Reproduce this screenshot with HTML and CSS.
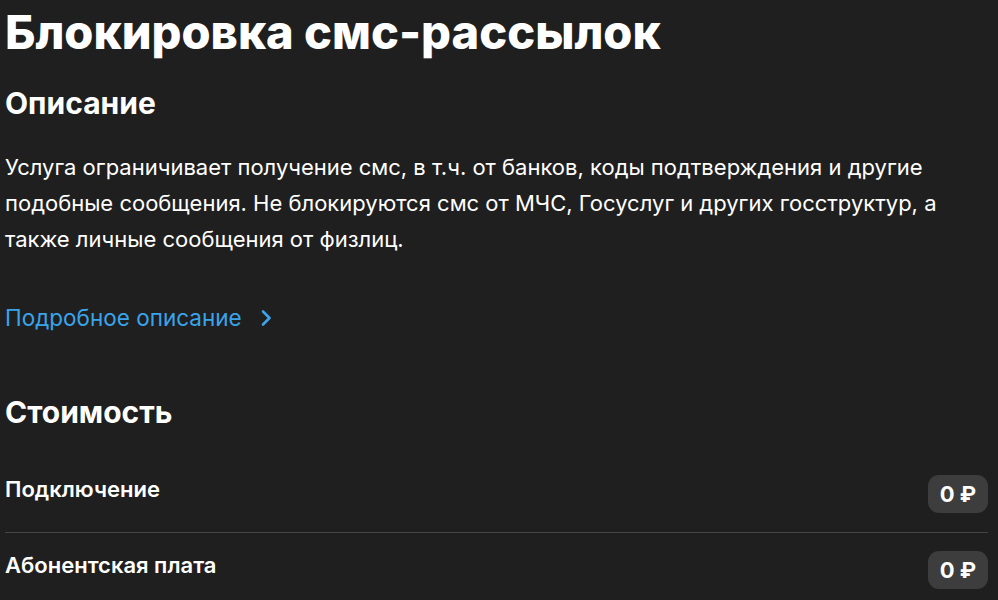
FILE: index.html
```html
<!DOCTYPE html>
<html lang="ru">
<head>
<meta charset="utf-8">
<link rel="stylesheet" href="styles.css">
</head>
<body>
<main class="page">
  <h1 class="title">Блокировка смс-рассылок</h1>
  <section class="block">
    <h2 class="heading">Описание</h2>
    <p class="text">Услуга ограничивает получение смс, в т.ч. от банков, коды подтверждения и другие подобные сообщения. Не блокируются смс от МЧС, Госуслуг и других госструктур, а также личные сообщения от физлиц.</p>
    <a class="more" href="#">Подробное описание
      <svg class="chev" width="12" height="18" viewBox="0 0 12 18"><path d="M3 2.5 L9.5 9 L3 15.5" fill="none" stroke="currentColor" stroke-width="2.6" stroke-linecap="round" stroke-linejoin="round"/></svg>
    </a>
  </section>
  <section class="block cost">
    <h2 class="heading">Стоимость</h2>
    <div class="rows">
      <div class="row">
        <span class="row-label">Подключение</span>
        <span class="badge">0 ₽</span>
      </div>
      <div class="row">
        <span class="row-label">Абонентская плата</span>
        <span class="badge">0 ₽</span>
      </div>
    </div>
  </section>
</main>
</body>
</html>
```

FILE: styles.css
```css
html, body {
  margin: 0;
  padding: 0;
  background: #1f1f1f;
}
body {
  font-family: Inter, "Noto Sans", sans-serif;
  color: #ffffff;
}
.page {
  padding: 0 10px 0 5px;
}
.title {
  margin: 0;
  padding-top: 6px;
  font-size: 47px;
  line-height: 52px;
  font-weight: 800;
}
.heading {
  margin: 0;
  font-size: 30px;
  line-height: 32px;
  font-weight: 700;
}
.block {
  margin-top: 29px;
}
.text {
  margin: 30px 0 0;
  font-size: 22px;
  line-height: 36px;
  font-weight: 400;
}
.more {
  display: inline-flex;
  align-items: center;
  gap: 18px;
  margin-top: 47px;
  color: #3aa4eb;
  text-decoration: none;
  font-size: 22.5px;
  line-height: 28px;
}
.cost {
  margin-top: 64px;
}
.rows {
  margin-top: 29px;
}
.row {
  display: flex;
  justify-content: space-between;
  align-items: flex-start;
  padding: 18px 0 19px;
  border-bottom: 1px solid #444444;
}
.row + .row {
  border-bottom: none;
}
.row-label {
  font-size: 22px;
  line-height: 28px;
  font-weight: 600;
}
.badge {
  background: #3d3d3d;
  border-radius: 11px;
  width: 60px;
  height: 38px;
  display: flex;
  align-items: center;
  justify-content: center;
  font-size: 22px;
  font-weight: 700;
}
```
